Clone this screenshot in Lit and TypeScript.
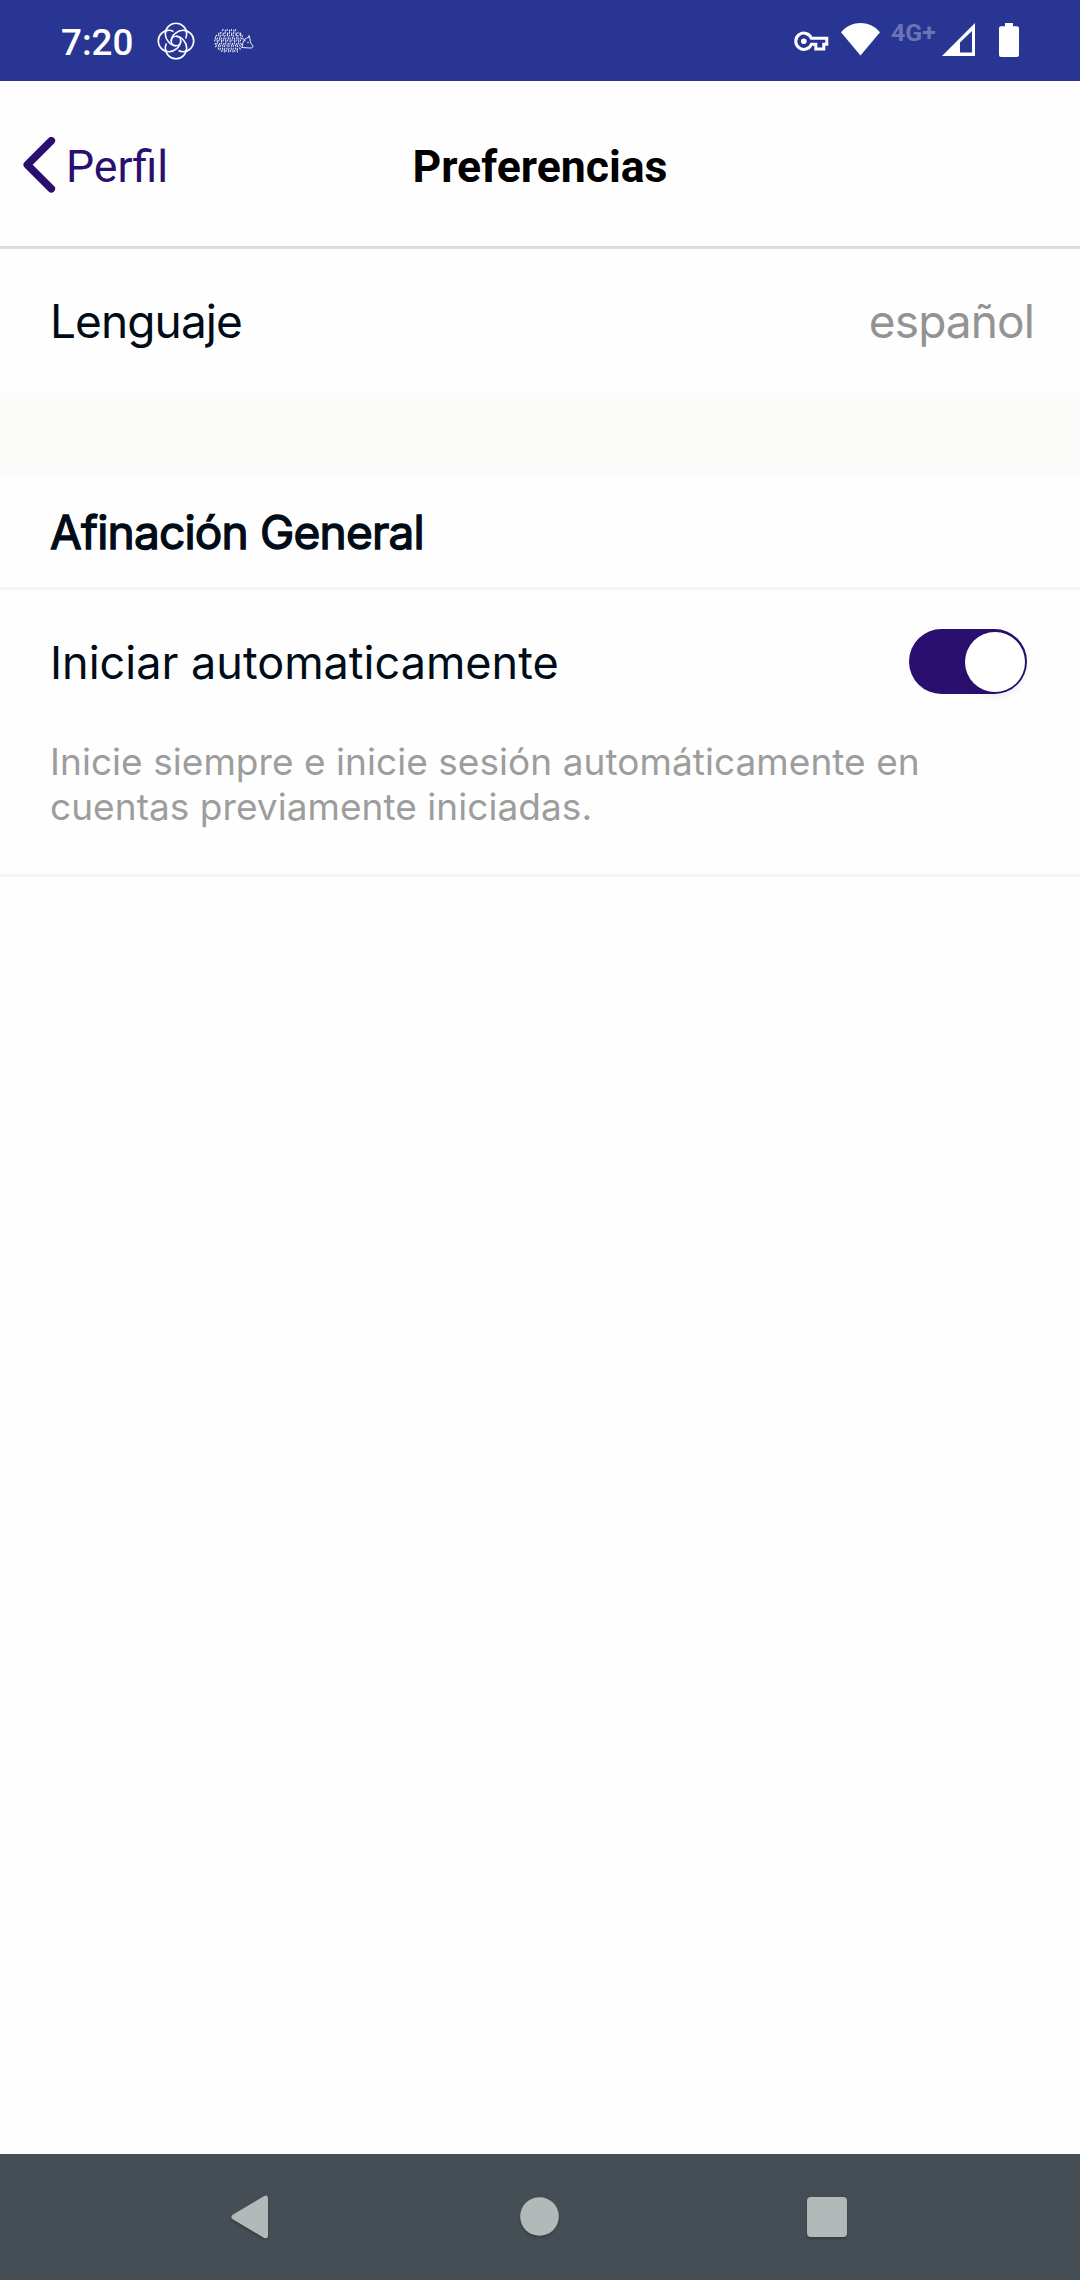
import { LitElement, html, css, svg } from "lit";
import { customElement, property } from "lit/decorators.js";

/* Short quills laid out on rows that follow the rounded back of the hedgehog. */
const quills: string = (() => {
  let d = "";
  for (let row = 0; row < 9; row++) {
    const y = 1.4 + row * 2.6;
    const dy = (y - 12) / 12;
    const half = 14.8 * Math.sqrt(Math.max(0, 1 - dy * dy));
    let i = 0;
    for (let x = 16 - half; x < 16 + half; x += 2.1, i++) {
      const yy = y + ((i * 2 + row * 3) % 4) * 0.3;
      if (x > 27 && yy > 12) continue;
      const lean = (x - 16) / 14;
      d += `M${x.toFixed(1)} ${yy.toFixed(1)}l${(lean * 0.7 + ((i + row) % 2 ? 0.3 : -0.3)).toFixed(1)} 1.2`;
    }
  }
  return d;
})();

const turns = [0, 90, 180, 270];

@customElement("status-bar")
export class StatusBar extends LitElement {
  static styles = css`
    :host {
      display: flex;
      align-items: flex-start;
      height: 81px;
      background: #283593;
      color: #fff;
      font-family: Roboto, sans-serif;
      box-sizing: border-box;
      padding: 22px 61px 0 61px;
    }
    svg { display: block; flex: none; }
    .time { width: 96px; font-size: 36.75px; font-weight: 500; line-height: 41px; white-space: nowrap; }
    .hog { margin: 6px 0 0 19px; }
    .right { margin-left: auto; display: flex; align-items: flex-start; }
    .key { margin-top: 8px; }
    .wifi { margin: 1px 0 0 12px; }
    .net { width: 46px; margin-left: 11px; font-size: 24.8px; font-weight: 700; line-height: 21px; color: #6b74b3; white-space: nowrap; }
    .signal { margin: 1px 0 0 5px; }
    .battery { margin: 1px 0 0 24px; }
  `;
  render() {
    return html`
      <div class="time">7:20</div>
      <svg width="38" height="38" viewBox="-19 -19 38 38" fill="none" stroke="#fff" stroke-width="1.6">
        ${turns.map((a) => svg`<path transform="rotate(${a})" d="M9.600 -2.500Q10.700 -5 10.700 -7A10.700 10.700 0 0 0 -10.700 -7C-10.700 -2 -6 4.700 0 4.700"/>`)}
        <circle r="4.800" />
      </svg>
      <svg class="hog" width="40" height="25" viewBox="0 0 40 25" fill="none" stroke="#fff" stroke-linecap="round">
        <path d=${quills} stroke-width="1.050" opacity="0.9" />
        <path d="M28 19.500L29 14.500C30 11.500 31.500 10 34.500 9.500L35 7.500L36 11C36 14 37.500 16.500 39 18C39 19.500 38 20 36 20L28 19.500" stroke-width="0.9" />
        <circle cx="34" cy="14.500" r="0.700" fill="#fff" stroke="none" />
      </svg>
      <div class="right">
        <svg class="key" width="35" height="22" viewBox="0 0 35 22" fill="none" stroke="#fff" stroke-width="3">
          <path d="M17.4 8.3H32.8V14.2H29.8V19H21.8V14.2H17.4A8.1 8.1 0 1 1 17.4 8.3Z" />
          <circle cx="9.800" cy="11.200" r="2.800" fill="#fff" stroke="none" />
        </svg>
        <svg class="wifi" width="39" height="33" viewBox="0 0 39 33"><path fill="#fff" d="M19.5 32.5L0 9.3C5.5 2.8 12.5 0 19.5 0S33.500 2.800 39 9.300Z" /></svg>
        <div class="net">4G+</div>
        <svg class="signal" width="33" height="33" viewBox="0 0 33 33"><path fill="#fff" fill-rule="evenodd" d="M33 0V33H0ZM30 8L18 19.500V29.500H30Z" /></svg>
        <svg class="battery" width="20" height="34" viewBox="0 0 20 34"><path fill="#fff" d="M6 0H14V3.300H18Q20 3.300 20 5.300V32Q20 34 18 34H2Q0 34 0 32V5.300Q0 3.300 2 3.300H6Z" /></svg>
      </div>
    `;
  }
}

@customElement("toggle-switch")
export class ToggleSwitch extends LitElement {
  @property({ type: Boolean }) on = false;
  static styles = css`
    :host { display: block; flex: none; }
    .track {
      display: flex;
      align-items: center;
      justify-content: flex-end;
      box-sizing: border-box;
      width: 118px;
      height: 65px;
      padding: 0 2.5px;
      border-radius: 33px;
      background: #2b0f70;
    }
    .off { justify-content: flex-start; background: #ccc; }
    .thumb { width: 60px; height: 60px; border-radius: 50%; background: #fff; box-shadow: 0 5px 7px rgba(0, 0, 0, 0.07); }
  `;
  render() {
    return html`<div class="track ${this.on ? "" : "off"}"><div class="thumb"></div></div>`;
  }
}

@customElement("nav-bar")
export class NavBar extends LitElement {
  static styles = css`
    :host {
      display: flex;
      align-items: center;
      justify-content: space-between;
      box-sizing: border-box;
      height: 126px;
      padding: 0 230px 0 226px;
      background: #454e54;
    }
    svg { display: block; overflow: visible; filter: drop-shadow(0 2px 1px rgba(0, 0, 0, 0.2)); fill: #b3b8b9; }
  `;
  render() {
    return html`
      <svg width="46" height="46" viewBox="0 0 46 46"><path d="M8 23L39.500 4.200V41.800Z" stroke="#b3b8b9" stroke-width="5" stroke-linejoin="round" /></svg>
      <svg width="46" height="46" viewBox="0 0 46 46"><circle cx="24.500" cy="22.500" r="19.300" /></svg>
      <svg width="46" height="46" viewBox="0 0 46 46"><rect x="3" y="3" width="40" height="40" rx="4" /></svg>
    `;
  }
}

@customElement("app-root")
export class AppRoot extends LitElement {
  static styles = css`
    :host {
      display: flex;
      flex-direction: column;
      width: 1080px;
      height: 2280px;
      background: #fefefe;
      color: #000c17;
      font-family: Inter, sans-serif;
    }
    .header {
      display: grid;
      grid-template-columns: 1fr auto 1fr;
      align-items: center;
      box-sizing: border-box;
      height: 168px;
      border-bottom: 3px solid #dcdcdc;
      font-family: Roboto, sans-serif;
      font-size: 44.6px;
    }
    .back { display: flex; align-items: center; color: #2b0f70; padding: 2px 0 0 23px; }
    .back svg { display: block; margin-right: 10px; }
    .back span { padding-top: 4px; }
    .title { margin: 0; padding-top: 6px; font-size: 44.6px; font-weight: 700; color: #000; }
    .row { display: flex; align-items: center; justify-content: space-between; box-sizing: border-box; white-space: nowrap; }
    .language { height: 144px; padding: 0 46px 0 50px; font-size: 46px; letter-spacing: -0.9px; }
    .gap { height: 84px; background: #fbfbf9; }
    .value { color: #939393; }
    .section { height: 113px; padding: 0 50px; border-bottom: 3px solid #f5f5f5; font-size: 46px; font-weight: 400; -webkit-text-stroke: 1.3px #000c17; letter-spacing: -0.8px; margin: 0; }
    .auto { border-bottom: 3px solid #f5f5f5; box-sizing: border-box; height: 287px; padding: 39px 53px 0 50px; }
    .auto .row { height: 65px; font-size: 45px; }
    .label { padding-top: 2px; }
    .note { margin: 45px 0 0; font-size: 37px; line-height: 45px; letter-spacing: 0.05px; color: #9d9d9d; }
    nav-bar { margin-top: auto; }
  `;
  render() {
    return html`
      <status-bar></status-bar>
      <header class="header">
        <div class="back">
          <svg width="33" height="56" viewBox="0 0 33 56" fill="none" stroke="currentColor" stroke-width="7.600" stroke-linecap="round" stroke-linejoin="round"><path d="M28.300 3.800L4.300 27.800L28.300 51.800" /></svg>
          <span>Perfil</span>
        </div>
        <h1 class="title">Preferencias</h1>
        <div></div>
      </header>
      <div class="row language"><span class="lang">Lenguaje</span><span class="value">español</span></div>
      <div class="gap"></div>
      <h2 class="row section"><span class="sec">Afinación General</span></h2>
      <section class="auto">
        <div class="row"><span class="label">Iniciar automaticamente</span><toggle-switch on></toggle-switch></div>
        <p class="note">Inicie siempre e inicie sesión automáticamente en<br />cuentas previamente iniciadas.</p>
      </section>
      <nav-bar></nav-bar>
    `;
  }
}
